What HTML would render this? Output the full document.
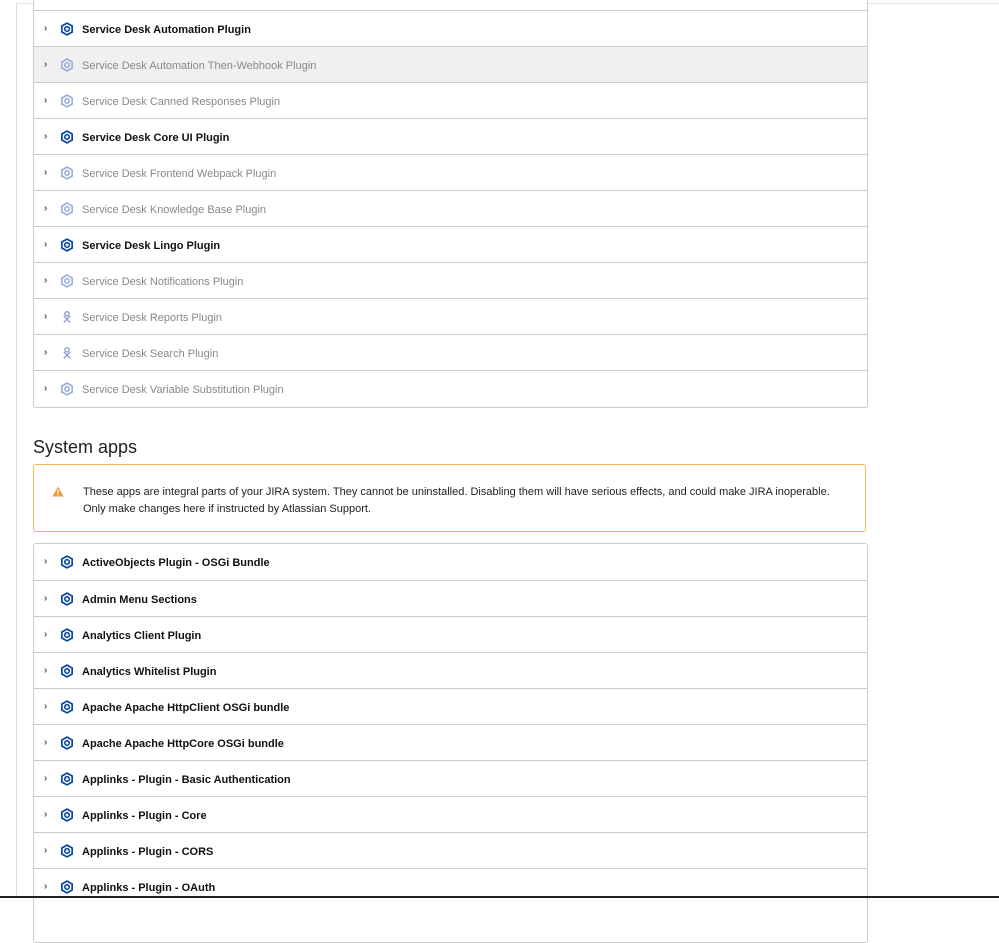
<!DOCTYPE html>
<html><head><meta charset="utf-8"><style>
*{box-sizing:border-box;margin:0;padding:0}
body{width:999px;height:898px;overflow:hidden;background:#fff;font-family:"Liberation Sans",sans-serif;position:relative}
.vl{position:absolute;left:16px;top:4px;width:1px;height:894px;background:#ddd}
.tl{position:absolute;left:16px;top:3px;width:983px;height:1px;background:#e4e4e4}
.bl{position:absolute;left:0;top:896px;width:999px;height:2px;background:#222}
.panel{position:absolute;left:33px;width:835px;border:1px solid #ccc;border-radius:3px;background:#fff}
.row{height:36px;border-top:1px solid #ccc;position:relative;font-size:11px;color:#888}
.row:first-child{border-top:none}
.row.b{color:#111;font-weight:bold}
.row.g{background:#f0f0f0}
.row .ch{position:absolute;left:10px;top:12px;font-size:10px;color:#555;font-weight:bold}
.row svg{position:absolute;left:26px;top:11px}
.row .t{position:absolute;left:48px;top:13px;white-space:nowrap}
h2{position:absolute;left:33px;top:437px;font-size:18px;font-weight:normal;color:#222}
.warn{position:absolute;left:33px;top:464px;width:833px;height:68px;border:1px solid #f7b955;border-radius:3px;font-size:11px;color:#222;line-height:16.5px;padding:19px 0 0 49px}
.warn svg{position:absolute;left:18px;top:21px}
</style></head><body>
<div class="tl"></div><div class="vl"></div>
<div class="panel" style="top:-1px;height:409px;border-top:none">
<div class="row" style="height:11px;border-top:none"></div>
<div class="row b"><span class="ch">›</span><svg width="14" height="14" viewBox="0 0 13 13"><path d="M6.5 1 L11.3 3.75 V9.25 L6.5 12 L1.7 9.25 V3.75Z" fill="none" stroke="#0747a6" stroke-width="1.6"/><circle cx="6.5" cy="6.5" r="2.1" fill="none" stroke="#0747a6" stroke-width="1.5"/></svg><span class="t">Service Desk Automation Plugin</span></div>
<div class="row g"><span class="ch">›</span><svg width="14" height="14" viewBox="0 0 13 13"><path d="M6.5 1 L11.3 3.75 V9.25 L6.5 12 L1.7 9.25 V3.75Z" fill="none" stroke="#9bb0dc" stroke-width="1.6"/><circle cx="6.5" cy="6.5" r="2.1" fill="none" stroke="#9bb0dc" stroke-width="1.5"/></svg><span class="t">Service Desk Automation Then-Webhook Plugin</span></div>
<div class="row"><span class="ch">›</span><svg width="14" height="14" viewBox="0 0 13 13"><path d="M6.5 1 L11.3 3.75 V9.25 L6.5 12 L1.7 9.25 V3.75Z" fill="none" stroke="#9bb0dc" stroke-width="1.6"/><circle cx="6.5" cy="6.5" r="2.1" fill="none" stroke="#9bb0dc" stroke-width="1.5"/></svg><span class="t">Service Desk Canned Responses Plugin</span></div>
<div class="row b"><span class="ch">›</span><svg width="14" height="14" viewBox="0 0 13 13"><path d="M6.5 1 L11.3 3.75 V9.25 L6.5 12 L1.7 9.25 V3.75Z" fill="none" stroke="#0747a6" stroke-width="1.6"/><circle cx="6.5" cy="6.5" r="2.1" fill="none" stroke="#0747a6" stroke-width="1.5"/></svg><span class="t">Service Desk Core UI Plugin</span></div>
<div class="row"><span class="ch">›</span><svg width="14" height="14" viewBox="0 0 13 13"><path d="M6.5 1 L11.3 3.75 V9.25 L6.5 12 L1.7 9.25 V3.75Z" fill="none" stroke="#9bb0dc" stroke-width="1.6"/><circle cx="6.5" cy="6.5" r="2.1" fill="none" stroke="#9bb0dc" stroke-width="1.5"/></svg><span class="t">Service Desk Frontend Webpack Plugin</span></div>
<div class="row"><span class="ch">›</span><svg width="14" height="14" viewBox="0 0 13 13"><path d="M6.5 1 L11.3 3.75 V9.25 L6.5 12 L1.7 9.25 V3.75Z" fill="none" stroke="#9bb0dc" stroke-width="1.6"/><circle cx="6.5" cy="6.5" r="2.1" fill="none" stroke="#9bb0dc" stroke-width="1.5"/></svg><span class="t">Service Desk Knowledge Base Plugin</span></div>
<div class="row b"><span class="ch">›</span><svg width="14" height="14" viewBox="0 0 13 13"><path d="M6.5 1 L11.3 3.75 V9.25 L6.5 12 L1.7 9.25 V3.75Z" fill="none" stroke="#0747a6" stroke-width="1.6"/><circle cx="6.5" cy="6.5" r="2.1" fill="none" stroke="#0747a6" stroke-width="1.5"/></svg><span class="t">Service Desk Lingo Plugin</span></div>
<div class="row"><span class="ch">›</span><svg width="14" height="14" viewBox="0 0 13 13"><path d="M6.5 1 L11.3 3.75 V9.25 L6.5 12 L1.7 9.25 V3.75Z" fill="none" stroke="#9bb0dc" stroke-width="1.6"/><circle cx="6.5" cy="6.5" r="2.1" fill="none" stroke="#9bb0dc" stroke-width="1.5"/></svg><span class="t">Service Desk Notifications Plugin</span></div>
<div class="row"><span class="ch">›</span><svg width="14" height="14" viewBox="0 0 13 13"><circle cx="6.5" cy="3.5" r="2" fill="none" stroke="#8aa0c8" stroke-width="1.2"/><path d="M3.5 11.5 L9.5 5.5 M9.5 11.5 L3.5 5.5" stroke="#8aa0c8" stroke-width="1.2"/></svg><span class="t">Service Desk Reports Plugin</span></div>
<div class="row"><span class="ch">›</span><svg width="14" height="14" viewBox="0 0 13 13"><circle cx="6.5" cy="3.5" r="2" fill="none" stroke="#8aa0c8" stroke-width="1.2"/><path d="M3.5 11.5 L9.5 5.5 M9.5 11.5 L3.5 5.5" stroke="#8aa0c8" stroke-width="1.2"/></svg><span class="t">Service Desk Search Plugin</span></div>
<div class="row"><span class="ch">›</span><svg width="14" height="14" viewBox="0 0 13 13"><path d="M6.5 1 L11.3 3.75 V9.25 L6.5 12 L1.7 9.25 V3.75Z" fill="none" stroke="#9bb0dc" stroke-width="1.6"/><circle cx="6.5" cy="6.5" r="2.1" fill="none" stroke="#9bb0dc" stroke-width="1.5"/></svg><span class="t">Service Desk Variable Substitution Plugin</span></div>
</div>
<h2>System apps</h2>
<div class="warn"><svg width="12" height="11" viewBox="0 0 12 11"><path d="M6 0.5 L11.5 10.5 H0.5Z" fill="#f79232"/><rect x="5.3" y="3.5" width="1.4" height="4" fill="#fff"/><rect x="5.3" y="8.2" width="1.4" height="1.3" fill="#fff"/></svg>These apps are integral parts of your JIRA system. They cannot be uninstalled. Disabling them will have serious effects, and could make JIRA inoperable.<br>Only make changes here if instructed by Atlassian Support.</div>
<div class="panel" style="top:543px;height:400px">
<div class="row b"><span class="ch">›</span><svg width="14" height="14" viewBox="0 0 13 13"><path d="M6.5 1 L11.3 3.75 V9.25 L6.5 12 L1.7 9.25 V3.75Z" fill="none" stroke="#0747a6" stroke-width="1.6"/><circle cx="6.5" cy="6.5" r="2.1" fill="none" stroke="#0747a6" stroke-width="1.5"/></svg><span class="t">ActiveObjects Plugin - OSGi Bundle</span></div>
<div class="row b"><span class="ch">›</span><svg width="14" height="14" viewBox="0 0 13 13"><path d="M6.5 1 L11.3 3.75 V9.25 L6.5 12 L1.7 9.25 V3.75Z" fill="none" stroke="#0747a6" stroke-width="1.6"/><circle cx="6.5" cy="6.5" r="2.1" fill="none" stroke="#0747a6" stroke-width="1.5"/></svg><span class="t">Admin Menu Sections</span></div>
<div class="row b"><span class="ch">›</span><svg width="14" height="14" viewBox="0 0 13 13"><path d="M6.5 1 L11.3 3.75 V9.25 L6.5 12 L1.7 9.25 V3.75Z" fill="none" stroke="#0747a6" stroke-width="1.6"/><circle cx="6.5" cy="6.5" r="2.1" fill="none" stroke="#0747a6" stroke-width="1.5"/></svg><span class="t">Analytics Client Plugin</span></div>
<div class="row b"><span class="ch">›</span><svg width="14" height="14" viewBox="0 0 13 13"><path d="M6.5 1 L11.3 3.75 V9.25 L6.5 12 L1.7 9.25 V3.75Z" fill="none" stroke="#0747a6" stroke-width="1.6"/><circle cx="6.5" cy="6.5" r="2.1" fill="none" stroke="#0747a6" stroke-width="1.5"/></svg><span class="t">Analytics Whitelist Plugin</span></div>
<div class="row b"><span class="ch">›</span><svg width="14" height="14" viewBox="0 0 13 13"><path d="M6.5 1 L11.3 3.75 V9.25 L6.5 12 L1.7 9.25 V3.75Z" fill="none" stroke="#0747a6" stroke-width="1.6"/><circle cx="6.5" cy="6.5" r="2.1" fill="none" stroke="#0747a6" stroke-width="1.5"/></svg><span class="t">Apache Apache HttpClient OSGi bundle</span></div>
<div class="row b"><span class="ch">›</span><svg width="14" height="14" viewBox="0 0 13 13"><path d="M6.5 1 L11.3 3.75 V9.25 L6.5 12 L1.7 9.25 V3.75Z" fill="none" stroke="#0747a6" stroke-width="1.6"/><circle cx="6.5" cy="6.5" r="2.1" fill="none" stroke="#0747a6" stroke-width="1.5"/></svg><span class="t">Apache Apache HttpCore OSGi bundle</span></div>
<div class="row b"><span class="ch">›</span><svg width="14" height="14" viewBox="0 0 13 13"><path d="M6.5 1 L11.3 3.75 V9.25 L6.5 12 L1.7 9.25 V3.75Z" fill="none" stroke="#0747a6" stroke-width="1.6"/><circle cx="6.5" cy="6.5" r="2.1" fill="none" stroke="#0747a6" stroke-width="1.5"/></svg><span class="t">Applinks - Plugin - Basic Authentication</span></div>
<div class="row b"><span class="ch">›</span><svg width="14" height="14" viewBox="0 0 13 13"><path d="M6.5 1 L11.3 3.75 V9.25 L6.5 12 L1.7 9.25 V3.75Z" fill="none" stroke="#0747a6" stroke-width="1.6"/><circle cx="6.5" cy="6.5" r="2.1" fill="none" stroke="#0747a6" stroke-width="1.5"/></svg><span class="t">Applinks - Plugin - Core</span></div>
<div class="row b"><span class="ch">›</span><svg width="14" height="14" viewBox="0 0 13 13"><path d="M6.5 1 L11.3 3.75 V9.25 L6.5 12 L1.7 9.25 V3.75Z" fill="none" stroke="#0747a6" stroke-width="1.6"/><circle cx="6.5" cy="6.5" r="2.1" fill="none" stroke="#0747a6" stroke-width="1.5"/></svg><span class="t">Applinks - Plugin - CORS</span></div>
<div class="row b"><span class="ch">›</span><svg width="14" height="14" viewBox="0 0 13 13"><path d="M6.5 1 L11.3 3.75 V9.25 L6.5 12 L1.7 9.25 V3.75Z" fill="none" stroke="#0747a6" stroke-width="1.6"/><circle cx="6.5" cy="6.5" r="2.1" fill="none" stroke="#0747a6" stroke-width="1.5"/></svg><span class="t">Applinks - Plugin - OAuth</span></div>
</div>
<div class="bl"></div>
</body></html>
